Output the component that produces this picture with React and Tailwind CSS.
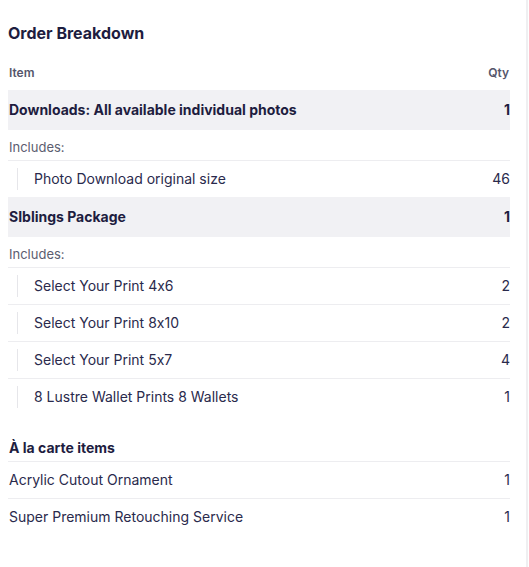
const packages = [
  {
    name: 'Downloads: All available individual photos',
    qty: 1,
    items: [{ name: 'Photo Download original size', qty: 46 }],
  },
  {
    name: 'SIblings Package',
    qty: 1,
    items: [
      { name: 'Select Your Print 4x6', qty: 2 },
      { name: 'Select Your Print 8x10', qty: 2 },
      { name: 'Select Your Print 5x7', qty: 4 },
      { name: '8 Lustre Wallet Prints 8 Wallets', qty: 1 },
    ],
  },
];

const extras = [
  { name: 'Acrylic Cutout Ornament', qty: 1 },
  { name: 'Super Premium Retouching Service', qty: 1 },
];

export default function App() {
  return (
    <div
      className="w-[528px] min-h-[567px] bg-white border-r-2 border-[#efeff1] pl-2 pr-4 pt-[21px] text-[#2a2a4c] [font-feature-settings:'calt'_0]"
      style={{ fontFamily: 'Inter, "Liberation Sans", sans-serif' }}
    >
      <h2 className="text-base leading-6 font-bold text-[#1e1d3f]">Order Breakdown</h2>

      <div className="mt-5 flex justify-between text-xs leading-4 font-semibold text-[#55566b] pl-px pr-px">
        <span>Item</span>
        <span>Qty</span>
      </div>

      <div className="mt-[9px]">
        {packages.map((pkg) => (
          <div key={pkg.name}>
            <div className="h-10 flex items-center justify-between bg-[#f1f1f4] pl-px text-sm font-bold text-[#1e1d3f]">
              <span>{pkg.name}</span>
              <span>{pkg.qty}</span>
            </div>
            <div className="h-[31px] flex items-end pb-[3px] pl-px text-[13px] text-[#5c5d70] border-b border-[#ededf0]">
              Includes:
            </div>
            {pkg.items.map((item, i) => (
              <div
                key={item.name}
                className={`flex items-center justify-between text-sm ${
                  i < pkg.items.length - 1 ? 'h-[37px] border-b border-[#ededf0]' : 'h-9'
                }`}
              >
                <div className="flex items-center h-full py-[7px] pl-[9px]">
                  <div className="w-px h-full bg-[#e6e6ea]" />
                  <span className="pl-4">{item.name}</span>
                </div>
                <span>{item.qty}</span>
              </div>
            ))}
          </div>
        ))}
      </div>

      <div className="mt-[23px]">
        <div className="h-[24px] flex items-start pl-px text-sm font-bold text-[#1e1d3f] border-b border-[#ededf0]">
          À la carte items
        </div>
        {extras.map((item, i) => (
          <div
            key={item.name}
            className={`flex items-center justify-between pl-px text-sm ${
              i < extras.length - 1 ? 'h-[37px] border-b border-[#ededf0]' : 'h-9'
            }`}
          >
            <span>{item.name}</span>
            <span>{item.qty}</span>
          </div>
        ))}
      </div>
    </div>
  );
}
